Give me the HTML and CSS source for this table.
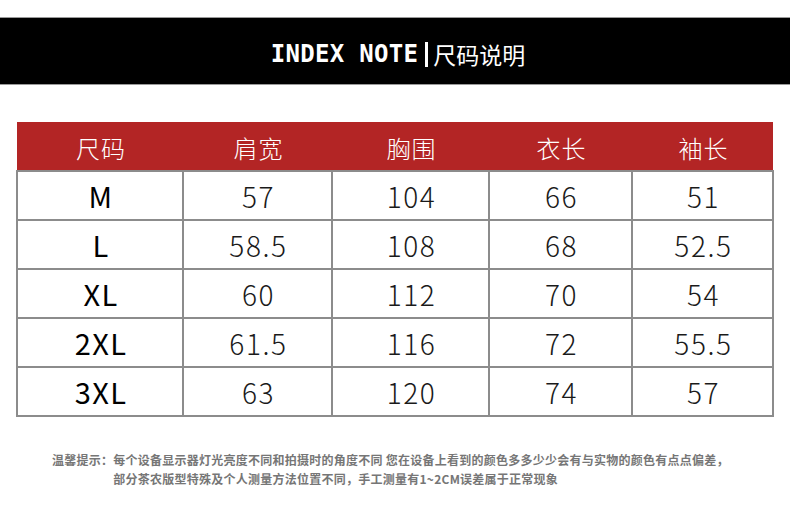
FILE: index.html
```html
<!DOCTYPE html>
<html lang="zh-CN">
<head>
<meta charset="utf-8">
<title>尺码说明</title>
<link rel="stylesheet" href="styles.css">
</head>
<body>
<div class="page">
  <header class="title-bar">
    <h1 class="title"><span class="title-en">INDEX NOTE</span><span class="title-sep"></span><span class="title-cn">尺码说明</span></h1>
  </header>

  <table class="size-table">
    <colgroup>
      <col class="c1"><col class="c2"><col class="c3"><col class="c4"><col class="c5">
    </colgroup>
    <thead>
      <tr><th>尺码</th><th>肩宽</th><th>胸围</th><th>衣长</th><th>袖长</th></tr>
    </thead>
    <tbody>
      <tr><td class="size">M</td><td>57</td><td>104</td><td>66</td><td>51</td></tr>
      <tr><td class="size">L</td><td>58.5</td><td>108</td><td>68</td><td>52.5</td></tr>
      <tr><td class="size">XL</td><td>60</td><td>112</td><td>70</td><td>54</td></tr>
      <tr><td class="size">2XL</td><td>61.5</td><td>116</td><td>72</td><td>55.5</td></tr>
      <tr><td class="size">3XL</td><td>63</td><td>120</td><td>74</td><td>57</td></tr>
    </tbody>
  </table>

  <div class="note">
    <span class="note-label">温馨提示：</span>
    <p class="note-text">每个设备显示器灯光亮度不同和拍摄时的角度不同 您在设备上看到的颜色多多少少会有与实物的颜色有点点偏差，<br>部分茶农版型特殊及个人测量方法位置不同，手工测量有1~2CM误差属于正常现象</p>
  </div>
</div>
</body>
</html>
```

FILE: styles.css
```css
* { box-sizing: border-box; }

html, body {
  margin: 0;
  padding: 0;
  background: #fff;
}

.page {
  width: 790px;
  height: 510px;
  padding-top: 17px;
  font-family: "Noto Sans CJK SC", "Noto Sans", sans-serif;
}

.title-bar {
  height: 68px;
  background: #000;
  border-top: 1px solid #9a9a9a;
  border-bottom: 1px solid #9a9a9a;
  display: flex;
  align-items: center;
  justify-content: center;
}

.title {
  margin: 0;
  padding: 6px 0 0 6px;
  display: flex;
  align-items: center;
  color: #fff;
  font-weight: 700;
  line-height: 1;
}

.title-en {
  font-family: "DejaVu Sans Mono", monospace;
  font-size: 24px;
  font-weight: 700;
  letter-spacing: 0.3px;
}

.title-sep {
  width: 3px;
  height: 25px;
  background: #fff;
  margin: 0 5px 0 7px;
}

.title-cn {
  font-family: "Noto Sans CJK SC", sans-serif;
  font-size: 23px;
  font-weight: 400;
}

.size-table {
  margin: 37px 0 0 16px;
  width: 756px;
  border-collapse: collapse;
  table-layout: fixed;
}

.c1 { width: 166px; }
.c2 { width: 149px; }
.c3 { width: 157px; }
.c4 { width: 143px; }
.c5 { width: 141px; }

.size-table th {
  background: #b32525;
  color: #fff;
  height: 49px;
  padding: 2px 0 0 2px;
  font-size: 24px;
  font-weight: 300;
  letter-spacing: 1px;
  text-align: center;
  vertical-align: middle;
}

.size-table td {
  height: 49px;
  padding: 0 0 0 2px;
  border: 2px solid #8c8c8c;
  text-align: center;
  vertical-align: middle;
  font-size: 28px;
  font-weight: 300;
  letter-spacing: 1.6px;
  color: #1a1a1a;
  line-height: 1;
}

.size-table td.size {
  font-weight: 400;
  font-size: 29px;
  letter-spacing: 1.4px;
  color: #000;
}

.note {
  display: flex;
  margin: 33px 0 0 52px;
  width: 700px;
  font-size: 12px;
  letter-spacing: 0.25px;
  line-height: 19px;
  color: #767676;
  font-weight: 700;
}

.note-label {
  flex: none;
}

.note-text {
  margin: 0;
  white-space: nowrap;
}
```
